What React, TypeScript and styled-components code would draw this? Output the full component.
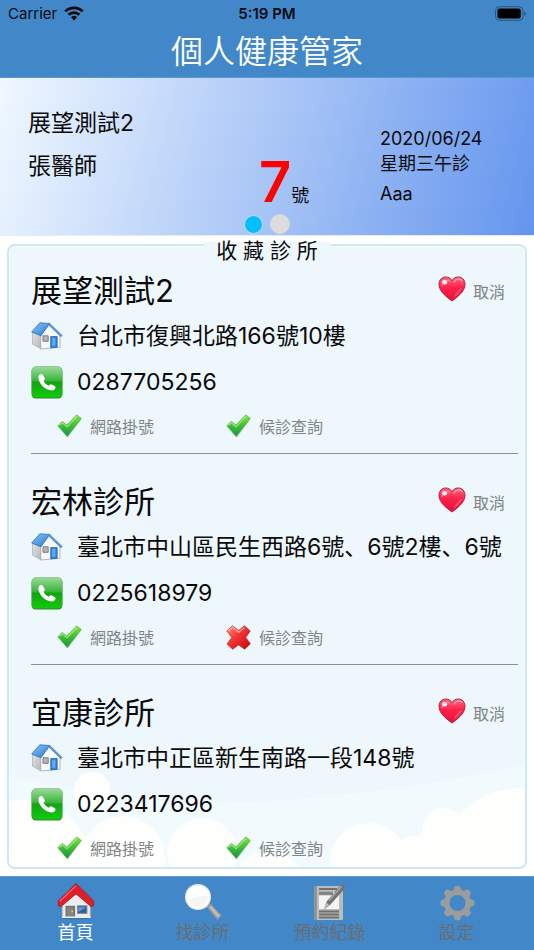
import React, { useState } from "react";
import styled, { createGlobalStyle } from "styled-components";

const BLUE = "#4288c8";

const GlobalStyle = createGlobalStyle`
  * { box-sizing: border-box; }
  body {
    margin: 0;
    background: #fff;
    color: #0a0a0a;
    font-family: Inter, "Noto Sans CJK TC", sans-serif;
    font-weight: 400;
  }
  button { border: 0; padding: 0; background: none; font: inherit; color: inherit; cursor: pointer; }
  a { color: inherit; text-decoration: none; }
  h1, h2, h3, p, ul { margin: 0; padding: 0; font-weight: inherit; }
  ul { list-style: none; }
  svg { display: block; flex: none; }
`;

const Screen = styled.div`
  display: flex;
  flex-direction: column;
  height: 100vh;
`;

const Header = styled.header`
  background: ${BLUE};
  border-bottom: 1px solid #5a98d0;
`;

const StatusBar = styled.div`
  display: grid;
  grid-template-columns: 1fr auto 1fr;
  align-items: center;
  height: 27px;
  padding: 0 8px;
  font-size: 15px;
  font-weight: 400;
  color: #05090d;
`;

const Carrier = styled.div`
  display: flex;
  align-items: center;
  gap: 7px;
`;

const Clock = styled.time`
  font-weight: 600;
`;

const BatterySlot = styled.div`
  justify-self: end;
`;

const AppTitle = styled.h1`
  height: 50px;
  line-height: 50px;
  font-size: 32px;
  font-weight: 350;
  text-align: center;
  color: #fff;
`;

const Hero = styled.section`
  position: relative;
  flex: none;
  display: grid;
  grid-template-columns: 231fr 121fr 154fr;
  height: 158px;
  padding-left: 28px;
  background: linear-gradient(105deg, #f0f8ff, #6495ed);
  border-bottom: 1px solid #e3ecfc;
`;

const HeroWho = styled.div`
  padding-top: 24px;
  font-size: 23px;
  line-height: 43px;
`;

const HeroNumber = styled.p`
  display: flex;
  align-items: baseline;
  padding-top: 70px;
  font-size: 18px;
  line-height: 68px;
`;

const BigNumber = styled.strong`
  font-size: 56px;
  font-weight: 600;
  color: #ff0000;
`;

const HeroWhen = styled.div`
  padding-top: 48px;
  font-size: 18px;
  line-height: 25px;
`;

const HeroNote = styled.p`
  padding-top: 5px;
`;

const Dots = styled.div`
  position: absolute;
  left: 0;
  right: 0;
  bottom: 0;
  display: flex;
  justify-content: center;
  align-items: center;
  gap: 7px;
  height: 22px;
`;

const Dot = styled.button<{ $active: boolean }>`
  width: ${(p) => (p.$active ? 19 : 20)}px;
  height: ${(p) => (p.$active ? 19 : 20)}px;
  border-radius: 50%;
  border: 1px solid ${(p) => (p.$active ? "#c9dcec" : "#dcdcdc")};
  background: ${(p) => (p.$active ? "#00bfff" : "#dcdcdc")};
`;

const Panel = styled.section`
  position: relative;
  flex: 1;
  min-height: 0;
  display: flex;
  flex-direction: column;
  margin: 8px 7px 7px;
  border: 2px solid #cde8f0;
  border-radius: 8px;
  background: #eef7fb;
  box-shadow: inset 0 0 0 1px #f8fcfd;
`;

const PanelTitle = styled.h2`
  align-self: center;
  z-index: 1;
  flex: none;
  height: 18px;
  margin-top: -4px;
  padding: 0 12px;
  font-size: 21px;
  line-height: 18px;
  background: #eef7fb;
`;

const CloudArt = styled.svg`
  position: absolute;
  left: 0;
  bottom: 0;
  width: 100%;
  height: 130px;
  border-radius: 0 0 6px 6px;
`;

const ClinicList = styled.ul`
  position: relative;
  flex: 1;
  min-height: 0;
  padding: 8px 7px 0 22px;
  overflow-y: auto;
  scrollbar-width: none;
`;

const ClinicCard = styled.li`
  padding-bottom: 6px;
  border-bottom: 1px solid #8b9294;
  & + & { padding-top: 25px; }
`;

const TitleRow = styled.div`
  display: flex;
  align-items: center;
  justify-content: space-between;
  height: 45px;
  padding-right: 13px;
`;

const ClinicName = styled.h3`
  font-size: 31px;
  line-height: 45px;
`;

const CancelButton = styled.button`
  display: flex;
  align-items: center;
  gap: 7px;
  font-size: 16px;
  color: #7f8486;
  svg { margin-bottom: 4px; }
`;

const InfoRow = styled.div`
  display: flex;
  align-items: center;
  gap: 14px;
  height: 46px;
  padding-right: 13px;
  font-size: 23px;
`;

const InfoText = styled.span`
  overflow: hidden;
  white-space: nowrap;
  font-family: Inter, "Noto Sans CJK SC", sans-serif;
  line-height: 32px;
`;

const PhoneLink = styled.a`
  line-height: 32px;
`;

const ServiceRow = styled.div`
  display: flex;
  align-items: center;
  gap: 72px;
  height: 42px;
  padding-left: 26px;
`;

const ServiceButton = styled.button`
  display: flex;
  align-items: center;
  gap: 8px;
  font-size: 16px;
  color: #7f8486;
`;

const TabBar = styled.nav`
  flex: none;
  display: flex;
  height: 74px;
  padding: 0 14px 0 12px;
  background: ${BLUE};
  border-top: 1px solid #5a98d0;
`;

const Tab = styled.button<{ $active: boolean }>`
  flex: 1;
  display: flex;
  flex-direction: column;
  align-items: center;
  padding-top: 5px;
  font-size: 18px;
  line-height: 22px;
  color: ${(p) => (p.$active ? "#fff" : "#676d75")};
`;

const WifiIcon = () => (
  <svg width="20" height="15" viewBox="0 0 20 15" fill="none" stroke="#05090d" strokeWidth="2.7">
    <path d="M1.3 5.4a12.4 12.4 0 0 1 17.4 0" />
    <path d="M4.6 8.8a7.7 7.7 0 0 1 10.8 0" />
    <path d="M10 14.4 7 11.3a4.3 4.3 0 0 1 6 0z" fill="#05090d" stroke="none" />
  </svg>
);

const BatteryIcon = () => (
  <svg width="31" height="15" viewBox="0 0 31 15">
    <rect x="0.5" y="0.7" width="27.5" height="13.6" rx="4" fill="none" stroke="#2b5578" />
    <rect x="2.4" y="2.6" width="23.4" height="9.8" rx="2.2" fill="#000" />
    <path d="M29.2 5.3q1.6.9 1.6 2.3t-1.6 2.3z" fill="#2b5578" />
  </svg>
);

const HeartIcon = () => (
  <svg width="28" height="26" viewBox="0 0 28 26">
    <defs>
      <linearGradient id="heart" x1="0" y1="0" x2="0" y2="1">
        <stop offset="0" stopColor="#fb6d80" />
        <stop offset="0.45" stopColor="#fc2148" />
        <stop offset="1" stopColor="#e90f3b" />
      </linearGradient>
    </defs>
    <path d="M14 25C9.500 21.500 1 16 1 8.200 1 4 4 1 7.700 1c2.800 0 5 1.400 6.300 3.700C15.300 2.400 17.500 1 20.300 1 24 1 27 4 27 8.200 27 16 18.500 21.500 14 25z" fill="url(#heart)" stroke="#b3213e" strokeWidth="1" />
    <path d="M16 6.200c1.500-3.600 6.600-4.300 8.400-1.200" fill="none" stroke="#ff9bab" strokeWidth="1.300" />
    <path d="M24.200 11.500c-1.500 4.700-5 7.600-8.700 10.200 2-4.600 4.500-8 8.700-10.200z" fill="#ff7c93" opacity=".5" />
    <ellipse cx="6.600" cy="6.200" rx="2.500" ry="2.200" fill="#fff" />
    <path d="M4 10q1-7 8-5" fill="none" stroke="#ffb0ba" strokeWidth="1" opacity=".7" />
  </svg>
);

const AddressIcon = () => (
  <svg width="32" height="28" viewBox="0 0 32 28">
    <defs>
      <linearGradient id="roofBlue" x1="0" y1="0" x2="1" y2="1">
        <stop offset="0" stopColor="#8cc4f7" />
        <stop offset="1" stopColor="#2878d0" />
      </linearGradient>
      <linearGradient id="wallGrey" x1="0" y1="0" x2="1" y2="1">
        <stop offset="0" stopColor="#e2e3e5" />
        <stop offset="1" stopColor="#b4b7ba" />
      </linearGradient>
    </defs>
    <path d="M9.500 13 18.500 3 29 13.500V25.300L9.500 27z" fill="#f8f8f8" stroke="#a4a7aa" strokeWidth=".8" />
    <path d="M1.500 10 9.800 13.200v13.600L1.500 22.300z" fill="url(#wallGrey)" stroke="#a4a7aa" strokeWidth=".6" />
    <path d="M8.800.8 18.500 1.500 10 13.800.7 10z" fill="url(#roofBlue)" stroke="#2b6fb8" strokeWidth=".8" />
    <path d="m18.500 1.300 12.700 12.200-1.200 1.200L18.600 3.800z" fill="#5ba3e8" stroke="#286ab0" strokeWidth=".6" />
    <path d="M19.700 14.500h6.500V25.200l-6.500.7z" fill="#2b83dc" stroke="#1961ae" strokeWidth=".7" />
    <path d="M21.200 16h3.200v7.500l-3.200.4z" fill="#62adf1" />
    <path d="M12 13.800h5.200v5.500H12z" fill="#b2b6ba" stroke="#777" strokeWidth=".9" />
  </svg>
);

const PhoneIcon = () => (
  <svg width="32" height="33" viewBox="0 0 32 33">
    <defs>
      <linearGradient id="phone" x1="0" y1="0" x2="0" y2="1">
        <stop offset="0" stopColor="#9bdb9a" />
        <stop offset="0.45" stopColor="#3cb43b" />
        <stop offset="0.5" stopColor="#12a312" />
        <stop offset="1" stopColor="#12cb0c" />
      </linearGradient>
    </defs>
    <rect x=".5" y=".6" width="31" height="32" rx="4.500" fill="#288b27" />
    <rect x=".9" y=".6" width="30.200" height="31" rx="4.200" fill="url(#phone)" />
    <path d="M7.400 11.500c0-1.700 1.400-3.300 2.700-3.400.8 0 1.500.4 2 1.200l1.500 2.700c.4.800.3 1.400-.3 2l-.8.800c1 2.300 2.900 4 5.200 4.900l1-1c.6-.6 1.300-.7 2-.3l2.800 1.500c.8.400 1.100 1 1 1.800-.3 1.600-1.700 2.700-3.700 2.700C14.300 24.300 7.500 17.600 7.400 11.500z" fill="#fff" />
  </svg>
);

const CheckIcon = () => (
  <svg width="25" height="24" viewBox="0 0 25 24">
    <defs>
      <linearGradient id="check" x1="0" y1="0" x2="0" y2="1">
        <stop offset="0" stopColor="#84e83c" />
        <stop offset="0.5" stopColor="#3fbe3a" />
        <stop offset="1" stopColor="#16943c" />
      </linearGradient>
    </defs>
    <path d="m1.500 12.500 3.900-4.500 4.500 3.500L19.900 1.700l4.500 3.300L10.900 23.500z" fill="#7c9b7c" opacity=".45" />
    <path d="m.9 11.800 4.300-4.400 4.700 3.700L19.700.9l4.600 3.500L10.200 22.500z" fill="url(#check)" stroke="#45a63d" strokeWidth=".6" />
    <path d="m2.300 11.500 3-2.700 4.800 3.900L20 2.300" fill="none" stroke="#b6f48c" strokeWidth="1.200" opacity=".75" />
  </svg>
);

const CrossIcon = () => (
  <svg width="25" height="25" viewBox="0 0 25 25">
    <defs>
      <linearGradient id="cross" x1="0" y1="0" x2="1" y2="1">
        <stop offset="0" stopColor="#ff9a80" />
        <stop offset="0.4" stopColor="#f6383a" />
        <stop offset="1" stopColor="#c70208" />
      </linearGradient>
    </defs>
    <path d="m.8 6 5.400-5.200 6.400 4.700 5.800-4.700 5.900 5.200-4.600 6.400 4.700 6.400-5.700 5.400-6.100-4.300-5.900 4.300-5.700-5.100 4.800-6.700z" fill="url(#cross)" stroke="#b92929" strokeWidth=".7" />
    <path d="m2.400 6 3.900-3.600 6.300 4.900 5.900-4.600" fill="none" stroke="#ffc0b0" strokeWidth="1.200" opacity=".8" />
  </svg>
);

const HomeTabIcon = () => (
  <svg width="40" height="40" viewBox="-1 -1 42 42">
    <ellipse cx="20" cy="36" rx="17" ry="2.200" fill="#2f5f8d" opacity=".6" />
    <path d="M5.500 19 20 7l15 12v17H5.500z" fill="#ececec" stroke="#aaa" strokeWidth=".8" />
    <path d="M20 .5 38.500 18.800v5l-2.500 1.300L20 11.500 4 25.100l-2.500-1.300v-5z" fill="#dd2029" stroke="#9b1b22" strokeWidth=".8" />
    <path d="M20 3 3 19.200" stroke="#f76a6d" strokeWidth="1.200" />
    <rect x="9" y="24" width="10" height="12" fill="#6f716c" />
    <rect x="10.500" y="25.500" width="7" height="10.500" fill="#85877f" />
    <circle cx="16" cy="30" r="1" fill="#e6d25a" />
    <rect x="21.500" y="24" width="10" height="8" fill="#2f5fa4" stroke="#8c8c8c" />
    <path d="M22.500 30.500v-5h8z" fill="#6c9ad3" />
    <path d="M5 36h30.500" stroke="#f7f7f7" strokeWidth="1.500" />
  </svg>
);

const SearchTabIcon = () => (
  <svg width="40" height="40" viewBox="0 0 40 40">
    <path d="m23 24.500 4-3.500L38.500 33.500 34.500 38z" fill="#989898" />
    <path d="m26 25.500 2-2 9 10-2 2.200z" fill="#bdbdbd" />
    <circle cx="15" cy="15" r="13" fill="#e9eaeb" />
    <circle cx="15" cy="15" r="11.500" fill="#fff" />
    <path d="M5.500 18Q14 13 25 14A10 10 0 0 1 5.500 18z" fill="#f5f5f5" />
  </svg>
);

const RecordTabIcon = () => (
  <svg width="40" height="40" viewBox="0 0 40 40">
    <rect x="4" y="4" width="29" height="34" rx="1" fill="#bcbcbc" />
    <path d="M5.500 4v34" stroke="#8c8c8c" strokeWidth="2.500" />
    <path d="M9 7h18M9 29.500h20M9 32.500h20M9 35.500h20" stroke="#707070" strokeWidth="1.800" />
    <rect x="9" y="10" width="20" height="17" fill="#f4f4f4" />
    <path d="M9 11.500h14" stroke="#858585" strokeWidth="3.500" />
    <path d="M14 27.500 17 19 30 4q1.500-1.900 4.500-1.500v4.200L20.500 22.500z" fill="#727272" />
    <path d="m19 18.500 12.500-14" stroke="#a9a9a9" strokeWidth="1.500" />
    <path d="m14 27.500 2.800-6.500 2.400 1.800z" fill="#bdbdbd" />
  </svg>
);

const teeth = [0, 45, 90, 135, 180, 225, 270, 315];

const SettingsTabIcon = () => (
  <svg width="40" height="40" viewBox="0 0 40 40">
    <g transform="translate(20.500 21)">
      <circle r="10.700" fill="none" stroke="#9c9c9c" strokeWidth="5.400" />
      {teeth.map((angle) => (
        <path key={angle} d="M-4.200-12-2.600-16.700q2.600-1 5.200 0L4.200-12z" fill="#9c9c9c" transform={`rotate(${angle})`} />
      ))}
    </g>
  </svg>
);

const Clouds = () => (
  <CloudArt viewBox="0 0 516 130" preserveAspectRatio="none" aria-hidden="true">
    <path d="M0 38Q130 72 258 64T516 28V130H0z" fill="#f1fafc" />
    <g fill="#fefefd">
      <circle cx="83" cy="53" r="18" />
      <circle cx="14" cy="133" r="70" />
      <circle cx="114" cy="121" r="42" />
      <circle cx="193" cy="116" r="35" />
      <circle cx="260" cy="150" r="36" />
      <circle cx="360" cy="125" r="39" />
      <circle cx="412" cy="138" r="40" />
      <circle cx="434" cy="92" r="21" />
      <circle cx="510" cy="130" r="79" />
    </g>
  </CloudArt>
);

type Clinic = { name: string; address: string; phone: string; booking: boolean; queue: boolean };

const clinics: Clinic[] = [
  { name: "展望測試2", address: "台北市復興北路166號10樓", phone: "0287705256", booking: true, queue: true },
  { name: "宏林診所", address: "臺北市中山區民生西路6號、6號2樓、6號", phone: "0225618979", booking: true, queue: false },
  { name: "宜康診所", address: "臺北市中正區新生南路一段148號", phone: "0223417696", booking: true, queue: true },
];

const tabs = [
  { label: "首頁", Icon: HomeTabIcon },
  { label: "找診所", Icon: SearchTabIcon },
  { label: "預約紀錄", Icon: RecordTabIcon },
  { label: "設定", Icon: SettingsTabIcon },
];

const Service = ({ label, available }: { label: string; available: boolean }) => (
  <ServiceButton>
    {available ? <CheckIcon /> : <CrossIcon />}
    {label}
  </ServiceButton>
);

export default function App() {
  const [tab, setTab] = useState(0);
  const [slide, setSlide] = useState(0);
  return (
    <Screen>
      <GlobalStyle />
      <Header>
        <StatusBar>
          <Carrier>
            Carrier
            <WifiIcon />
          </Carrier>
          <Clock>5:19 PM</Clock>
          <BatterySlot>
            <BatteryIcon />
          </BatterySlot>
        </StatusBar>
        <AppTitle>個人健康管家</AppTitle>
      </Header>
      <Hero>
        <HeroWho>
          <p>展望測試2</p>
          <p>張醫師</p>
        </HeroWho>
        <HeroNumber>
          <BigNumber>7</BigNumber>號
        </HeroNumber>
        <HeroWhen>
          <p>2020/06/24</p>
          <p>星期三午診</p>
          <HeroNote>Aaa</HeroNote>
        </HeroWhen>
        <Dots>
          {[0, 1].map((i) => (
            <Dot key={i} $active={slide === i} aria-label={`${i + 1}`} onClick={() => setSlide(i)} />
          ))}
        </Dots>
      </Hero>
      <Panel>
        <Clouds />
        <PanelTitle>收 藏 診 所</PanelTitle>
        <ClinicList>
          {clinics.map((c) => (
            <ClinicCard key={c.phone}>
              <TitleRow>
                <ClinicName>{c.name}</ClinicName>
                <CancelButton>
                  <HeartIcon />
                  取消
                </CancelButton>
              </TitleRow>
              <InfoRow>
                <AddressIcon />
                <InfoText>{c.address}</InfoText>
              </InfoRow>
              <InfoRow>
                <PhoneIcon />
                <PhoneLink href={`tel:${c.phone}`}>{c.phone}</PhoneLink>
              </InfoRow>
              <ServiceRow>
                <Service label="網路掛號" available={c.booking} />
                <Service label="候診查詢" available={c.queue} />
              </ServiceRow>
            </ClinicCard>
          ))}
        </ClinicList>
      </Panel>
      <TabBar>
        {tabs.map(({ label, Icon }, i) => (
          <Tab key={label} $active={tab === i} onClick={() => setTab(i)}>
            <Icon />
            {label}
          </Tab>
        ))}
      </TabBar>
    </Screen>
  );
}
